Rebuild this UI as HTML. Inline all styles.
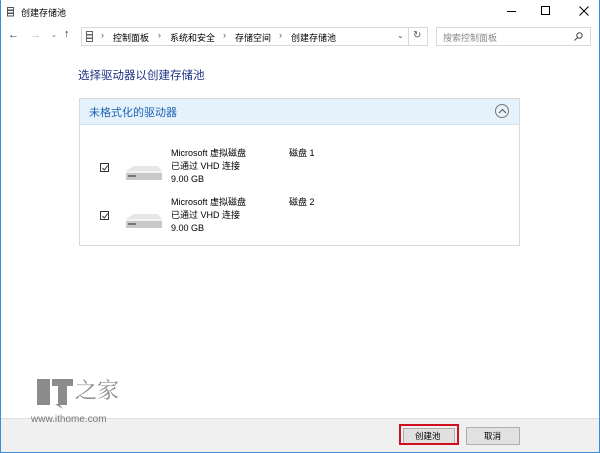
<!DOCTYPE html>
<html><head><meta charset="utf-8"><style>
*{margin:0;padding:0;box-sizing:border-box}
body{width:600px;height:453px;overflow:hidden;background:#fff;font-family:"Liberation Sans","Noto Sans CJK SC",sans-serif;font-size:9px;color:#000;position:relative}
.win{position:absolute;left:0;top:0;width:600px;height:453px;border:1px solid #3c8fd6;border-top:none}
.a{position:absolute;white-space:nowrap}
</style></head><body>
<div class="win"></div>
<svg class="a" style="left:7px;top:7px" width="8" height="10"><rect x="0.5" y="0.5" width="6" height="2.5" fill="none" stroke="#555"/><rect x="0.5" y="3.5" width="6" height="2.5" fill="none" stroke="#555"/><rect x="0.5" y="6.5" width="6" height="2.5" fill="none" stroke="#555"/></svg>
<div class="a" style="left:21px;top:6px;font-size:9px">创建存储池</div>
<div class="a" style="left:507px;top:11px;width:9px;height:1px;background:#000"></div>
<div class="a" style="left:541px;top:6px;width:9px;height:9px;border:1px solid #000"></div>
<svg class="a" style="left:579px;top:6px" width="10" height="10"><path d="M0.5 0.5L9.5 9.5M9.5 0.5L0.5 9.5" stroke="#000"/></svg>
<div class="a" style="left:8px;top:29px;font-size:11px;color:#333">←</div>
<div class="a" style="left:30px;top:29px;font-size:11px;color:#bbb">→</div>
<div class="a" style="left:51px;top:31px;font-size:7px;color:#555">⌄</div>
<div class="a" style="left:64px;top:28px;font-size:11px;color:#333">↑</div>
<div class="a" style="left:81px;top:27px;width:347px;height:19px;border:1px solid #d9d9d9"></div>
<svg class="a" style="left:86px;top:31px" width="8" height="11"><rect x="0.5" y="0.5" width="6" height="3" fill="none" stroke="#666"/><rect x="0.5" y="4" width="6" height="3" fill="none" stroke="#666"/><rect x="0.5" y="7.5" width="6" height="3" fill="none" stroke="#666"/></svg>
<div class="a" style="left:101px;top:30px;font-size:9px;color:#555">›</div>
<div class="a" style="left:113px;top:31px;font-size:9px">控制面板</div>
<div class="a" style="left:158px;top:30px;font-size:9px;color:#555">›</div>
<div class="a" style="left:170px;top:31px;font-size:9px">系统和安全</div>
<div class="a" style="left:223px;top:30px;font-size:9px;color:#555">›</div>
<div class="a" style="left:235px;top:31px;font-size:9px">存储空间</div>
<div class="a" style="left:279px;top:30px;font-size:9px;color:#555">›</div>
<div class="a" style="left:291px;top:31px;font-size:9px">创建存储池</div>
<div class="a" style="left:397px;top:31px;font-size:8px;color:#555">⌄</div>
<div class="a" style="left:408px;top:27px;width:1px;height:19px;background:#d9d9d9"></div>
<div class="a" style="left:413px;top:30px;font-size:10px;color:#555">↻</div>
<div class="a" style="left:436px;top:27px;width:155px;height:19px;border:1px solid #d9d9d9"></div>
<div class="a" style="left:443px;top:31px;font-size:9px;color:#888">搜索控制面板</div>
<svg class="a" style="left:574px;top:32px" width="9" height="9"><circle cx="5.5" cy="3.5" r="2.7" fill="none" stroke="#444"/><path d="M3.5 5.5L0.5 8.5" stroke="#444"/></svg>
<div class="a" style="left:78px;top:67px;font-size:11.5px;color:#1e3287">选择驱动器以创建存储池</div>
<div class="a" style="left:79px;top:98px;width:441px;height:148px;border:1px solid #d9d9d9"></div>
<div class="a" style="left:80px;top:99px;width:439px;height:26px;background:#e5f1fb;border-bottom:1px solid #cfe2f2"></div>
<div class="a" style="left:89px;top:104px;font-size:11px;color:#1e64b4">未格式化的驱动器</div>
<div class="a" style="left:495px;top:104px;width:14px;height:14px;border:1px solid #777;border-radius:50%"></div>
<svg class="a" style="left:498px;top:108px" width="9" height="6"><path d="M1 5L4.5 1.5L8 5" fill="none" stroke="#555"/></svg>
<div class="a" style="left:100px;top:163px;width:9px;height:9px;border:1px solid #333"></div>
<svg class="a" style="left:101px;top:164px" width="8" height="8"><path d="M1.5 4L3.3 6L6.8 1.5" fill="none" stroke="#333"/></svg>
<div class="a" style="left:100px;top:211px;width:9px;height:9px;border:1px solid #333"></div>
<svg class="a" style="left:101px;top:212px" width="8" height="8"><path d="M1.5 4L3.3 6L6.8 1.5" fill="none" stroke="#333"/></svg>
<svg class="a" style="left:124px;top:164px" width="40" height="20"><path d="M2 7L10 2H34L38 7Z" fill="#e6e6e6"/><rect x="2" y="7" width="36" height="9" fill="#c9c9c9"/><rect x="2" y="7" width="36" height="2" fill="#f2f2f2"/><rect x="4" y="11" width="8" height="2" fill="#777"/></svg>
<svg class="a" style="left:124px;top:212px" width="40" height="20"><path d="M2 7L10 2H34L38 7Z" fill="#e6e6e6"/><rect x="2" y="7" width="36" height="9" fill="#c9c9c9"/><rect x="2" y="7" width="36" height="2" fill="#f2f2f2"/><rect x="4" y="11" width="8" height="2" fill="#777"/></svg>
<div class="a" style="left:171px;top:147px;font-size:9px;line-height:13px">Microsoft 虚拟磁盘<br>已通过 VHD 连接<br>9.00 GB</div>
<div class="a" style="left:289px;top:147px;font-size:9px;line-height:13px">磁盘 1</div>
<div class="a" style="left:171px;top:196px;font-size:9px;line-height:13px">Microsoft 虚拟磁盘<br>已通过 VHD 连接<br>9.00 GB</div>
<div class="a" style="left:289px;top:196px;font-size:9px;line-height:13px">磁盘 2</div>
<!-- watermark -->
<div class="a" style="left:37px;top:379px;width:13px;height:26px;background:#8c8c8c"></div>
<div class="a" style="left:52px;top:379px;width:21px;height:7px;background:#8c8c8c"></div>
<div class="a" style="left:58px;top:379px;width:9px;height:26px;background:#8c8c8c"></div>
<svg class="a" style="left:37px;top:404px" width="36" height="6"><path d="M18 0H22L26 5Z" fill="#8c8c8c"/></svg>
<div class="a" style="left:75px;top:374px;font-size:22px;color:#8c8c8c;font-family:'Noto Serif CJK SC',serif">之家</div>
<div class="a" style="left:1px;top:418px;width:598px;height:34px;background:#f0f0f0;border-top:1px solid #dfdfdf"></div>
<div class="a" style="left:31px;top:414px;font-size:10px;color:#777">www.ithome.com</div>
<div class="a" style="left:403px;top:428px;width:52px;height:16px;background:#e1e1e1;border:1px solid #adadad"></div>
<div class="a" style="left:399px;top:424px;width:60px;height:21px;border:2px solid #d0101f"></div>
<div class="a" style="left:415px;top:430px;font-size:8.5px">创建池</div>
<div class="a" style="left:466px;top:427px;width:54px;height:18px;background:#e1e1e1;border:1px solid #adadad"></div>
<div class="a" style="left:484px;top:430px;font-size:8.5px">取消</div>
</body></html>
